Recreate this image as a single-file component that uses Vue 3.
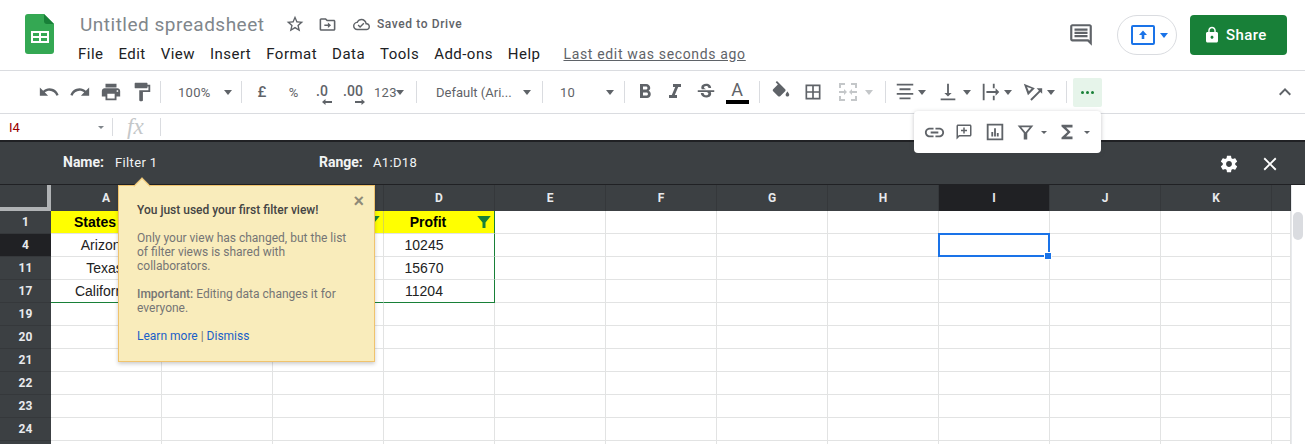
<script setup>
const I = {
  star: ['M22 9.24l-7.19-.62L12 2 9.19 8.63 2 9.24l5.46 4.73L5.82 21 12 17.27 18.18 21l-1.63-7.03L22 9.24zM12 15.4l-3.76 2.27 1-4.28-3.32-2.88 4.38-.38L12 6.1l1.71 4.04 4.38.38-3.32 2.88 1 4.28L12 15.4z'],
  folder: ['M20 6h-8l-2-2H4c-1.1 0-2 .9-2 2v12c0 1.1.9 2 2 2h16c1.1 0 2-.9 2-2V8c0-1.1-.9-2-2-2zm0 12H4V6h5.17l2 2H20v10z', 'M12.5 16.5l4-3.5-4-3.5V12H8v2h4.5z'],
  cloud: ['M19.35 10.04C18.67 6.59 15.64 4 12 4 9.11 4 6.6 5.64 5.35 8.04 2.34 8.36 0 10.91 0 14c0 3.31 2.69 6 6 6h13c2.76 0 5-2.24 5-5 0-2.64-2.05-4.78-4.65-4.96zM19 18H6c-2.21 0-4-1.79-4-4 0-2.05 1.53-3.76 3.56-3.97l1.07-.11.5-.95C8.08 7.14 9.94 6 12 6c2.62 0 4.88 1.86 5.39 4.43l.3 1.5 1.53.11c1.56.1 2.78 1.41 2.78 2.96 0 1.65-1.35 3-3 3zm-9-3.82l-2.09-2.09L6.5 13.5 10 17l6.01-6.01-1.41-1.41z'],
  comment: ['M20 2H4c-1.1 0-2 .9-2 2v12c0 1.1.9 2 2 2h14l4 4V4c0-1.1-.9-2-2-2zm0 15.17L18.83 16H4V4h16v13.17z', 'M6 12h12v2H6zM6 9h12v2H6zM6 6h12v2H6z'],
  lock: ['M18 8h-1V6c0-2.76-2.24-5-5-5S7 3.24 7 6v2H6c-1.1 0-2 .9-2 2v10c0 1.1.9 2 2 2h12c1.1 0 2-.9 2-2V10c0-1.1-.9-2-2-2zm-6 9c-1.1 0-2-.9-2-2s.9-2 2-2 2 .9 2 2-.9 2-2 2zm3.1-9H8.9V6c0-1.71 1.39-3.1 3.1-3.1 1.71 0 3.1 1.39 3.1 3.1v2z'],
  undo: ['M12.5 8c-2.65 0-5.05.99-6.9 2.6L2 7v9h9l-3.62-3.62c1.39-1.16 3.16-1.88 5.12-1.88 3.54 0 6.55 2.31 7.6 5.5l2.37-.78C21.08 11.03 17.15 8 12.5 8z'],
  redo: ['M18.4 10.6C16.55 8.99 14.15 8 11.5 8c-4.65 0-8.58 3.03-9.96 7.22L3.9 16c1.05-3.19 4.05-5.5 7.6-5.5 1.95 0 3.73.72 5.12 1.88L13 16h9V7l-3.6 3.6z'],
  print: ['M19 8H5c-1.66 0-3 1.34-3 3v6h4v4h12v-4h4v-6c0-1.66-1.34-3-3-3zm-3 11H8v-5h8v5zm3-7c-.55 0-1-.45-1-1s.45-1 1-1 1 .45 1 1-.45 1-1 1zm-1-9H6v4h12V3z'],
  paint: ['M18 4V3c0-.55-.45-1-1-1H5c-.55 0-1 .45-1 1v4c0 .55.45 1 1 1h12c.55 0 1-.45 1-1V6h1v4H9v11c0 .55.45 1 1 1h2c.55 0 1-.45 1-1v-9h8V4h-3z'],
  bold: ['M15.6 10.79c.97-.67 1.65-1.77 1.65-2.79 0-2.26-1.75-4-4-4H7v14h7.04c2.09 0 3.71-1.7 3.71-3.79 0-1.52-.86-2.82-2.15-3.42zM10 6.5h3c.83 0 1.5.67 1.5 1.5s-.67 1.5-1.5 1.5h-3v-3zm3.5 9H10v-3h3.5c.83 0 1.5.67 1.5 1.5s-.67 1.5-1.5 1.5z'],
  italic: ['M10 4v3h2.21l-3.42 8H6v3h8v-3h-2.21l3.42-8H18V4z'],
  strike: ['M6.85 7.08C6.85 4.37 9.45 3 12.24 3c1.64 0 3 .49 3.9 1.28.77.65 1.46 1.73 1.46 3.24h-3.01c0-.31-.05-.59-.15-.85-.29-.86-1.2-1.28-2.25-1.28-1.86 0-2.34 1.02-2.34 1.7 0 .48.25.88.74 1.21.38.25.77.48 1.41.7H7.39c-.21-.34-.54-.89-.54-1.92zM21 12v-2H3v2h9.62c1.15.45 1.96.75 1.96 1.97 0 1-.81 1.67-2.28 1.67-1.54 0-2.93-.54-2.93-2.51H6.4c0 .55.08 1.13.24 1.58.81 2.29 3.29 3.3 5.67 3.3 2.27 0 5.3-.89 5.3-4.05 0-.3-.01-1.16-.48-1.94H21V12z'],
  fill: ['M16.56 8.94L7.62 0 6.21 1.41l2.38 2.38-5.15 5.15c-.59.59-.59 1.54 0 2.12l5.5 5.5c.29.29.68.44 1.06.44s.77-.15 1.06-.44l5.5-5.5c.59-.58.59-1.53 0-2.12z', 'M19 11.5s-2 2.17-2 3.5c0 1.1.9 2 2 2s2-.9 2-2c0-1.33-2-3.5-2-3.5z'],
  borders: ['M3 3v18h18V3H3zm8 16H5v-6h6v6zm0-8H5V5h6v6zm8 8h-6v-6h6v6zm0-8h-6V5h6v6z'],
  merge: ['M3 3h6v2H5v3H3zM15 3h6v5h-2V5h-4zM3 16h2v3h4v2H3zM19 16h2v5h-6v-2h4zM3 11h5V9l3 3-3 3v-2H3zM21 13h-5v2l-3-3 3-3v2h5z'],
  align: ['M3 3h18v2H3zM6 8h12v2H6zM3 13h18v2H3zM6 18h12v2H6z'],
  valign: ['M16 13h-3V3h-2v10H8l4 4 4-4zM4 19v2h16v-2H4z'],
  wrap: ['M3 3h2v18H3zM14 3h2v5h-2zM14 16h2v5h-2zM7 11h10V8l4 4-4 4v-3H7z'],
  rotate: ['M2 3l12 5-7.500 7.500zM5.500 6.500l2 4.600 3-3z', 'M9 20l9.500-9.500L16 8h6v6l-2-2-9.500 9.500z'],
  up: ['M7.41 15.41L12 10.83l4.59 4.58L18 14l-6-6-6 6z'],
  link: ['M3.9 12c0-1.71 1.39-3.1 3.1-3.1h4V7H7c-2.76 0-5 2.24-5 5s2.24 5 5 5h4v-1.9H7c-1.71 0-3.1-1.39-3.1-3.1zM8 13h8v-2H8v2zm9-6h-4v1.9h4c1.71 0 3.1 1.39 3.1 3.1s-1.39 3.1-3.1 3.1h-4V17h4c2.76 0 5-2.24 5-5s-2.24-5-5-5z'],
  addc: ['M20 2H4c-1.1 0-2 .9-2 2v18l4-4h14c1.1 0 2-.9 2-2V4c0-1.1-.9-2-2-2zm0 14H5.17L4 17.17V4h16v12z', 'M11 6h2v3h3v2h-3v3h-2v-3H8V9h3z'],
  chart: ['M3 3h18v18H3zm2 2v14h14V5z', 'M8 12h2v5H8zM11 8h2v9h-2zM14 13h2v4h-2z'],
  funnel: ['M3 4h18l-7 8.5V20h-4v-7.5zm4.2 2l4.8 5.8L16.8 6z'],
  sigma: ['M18 4H6v2l6.5 6L6 18v2h12v-3h-7l5-5-5-5h7z'],
  gear: ['M19.43 12.98c.04-.32.07-.64.07-.98s-.03-.66-.07-.98l2.11-1.65c.19-.15.24-.42.12-.64l-2-3.46c-.12-.22-.39-.3-.61-.22l-2.49 1c-.52-.4-1.08-.73-1.69-.98l-.38-2.65C14.46 2.18 14.25 2 14 2h-4c-.25 0-.46.18-.49.42l-.38 2.65c-.61.25-1.17.59-1.69.98l-2.49-1c-.23-.09-.49 0-.61.22l-2 3.46c-.13.22-.07.49.12.64l2.11 1.65c-.04.32-.07.65-.07.98s.03.66.07.98l-2.11 1.65c-.19.15-.24.42-.12.64l2 3.46c.12.22.39.3.61.22l2.49-1c.52.4 1.08.73 1.69.98l.38 2.65c.03.24.24.42.49.42h4c.25 0 .46-.18.49-.42l.38-2.65c.61-.25 1.17-.59 1.69-.98l2.49 1c.23.09.49 0 .61-.22l2-3.46c.12-.22.07-.49-.12-.64l-2.11-1.65zM12 15.5c-1.93 0-3.5-1.57-3.5-3.5s1.57-3.5 3.5-3.5 3.5 1.57 3.5 3.5-1.57 3.5-3.5 3.5z'],
  close: ['M19 6.41L17.59 5 12 10.59 6.41 5 5 6.41 10.59 12 5 17.59 6.41 19 12 13.41 17.59 19 19 17.59 13.41 12z'],
  solid: ['M3 4h18l-7 8.5V20h-4v-7.5z'],
}
const menus = ['File', 'Edit', 'View', 'Insert', 'Format', 'Data', 'Tools', 'Add-ons', 'Help']
const tools = [
  { icon: 'undo', w: 31 }, { icon: 'redo', w: 31 }, { icon: 'print', w: 31 }, { icon: 'paint', w: 31 },
  { sep: 1, w: 7 },
  { text: '100%', w: 74, pad: 14, arrow: 60 },
  { sep: 1, w: 7 },
  { label: '£', w: 34, bold: 1 }, { label: '%', w: 29 },
  { dec: '.0', dir: 'l', w: 28 }, { dec: '.00', dir: 'r', w: 34 },
  { text: '123', w: 38, pad: 4, arrow: 26 },
  { sep: 1, w: 16 },
  { text: 'Default (Ari...', w: 111, pad: 12, arrow: 99, tight: 1 },
  { sep: 1, w: 14 },
  { text: '10', w: 68, pad: 11, arrow: 57 },
  { sep: 1, w: 14 },
  { icon: 'bold', w: 28, large: 1 }, { icon: 'italic', w: 31, large: 1 }, { icon: 'strike', w: 31 },
  { color: 1, w: 32 },
  { sep: 1, w: 12 },
  { icon: 'fill', w: 32 }, { icon: 'borders', w: 32, small: 1 },
  { icon: 'merge', w: 38, faint: 1, extra: 13, large: 1 },
  { sep: 1, w: 10 },
  { icon: 'align', w: 30, extra: 10 }, { icon: 'valign', w: 35, extra: 10 },
  { icon: 'wrap', w: 31, extra: 11 }, { icon: 'rotate', w: 32, extra: 11 },
  { sep: 1, w: 13 },
]
const popup = [
  { icon: 'link' }, { icon: 'addc' }, { icon: 'chart' },
  { icon: 'funnel', arrow: 1 }, { icon: 'sigma', arrow: 1 },
]
const cols = ['A', 'B', 'C', 'D', 'E', 'F', 'G', 'H', 'I', 'J', 'K', '']
const rows = [
  { id: 1, n: '1', c: ['States', '', '', 'Profit'], head: 1 },
  { id: 4, n: '4', c: ['Arizona', '', '', '10245'], sel: 1 },
  { id: 11, n: '11', c: ['Texas', '', '', '15670'] },
  { id: 17, n: '17', c: ['California', '', '', '11204'], last: 1 },
  { id: 19, n: '19', c: [] }, { id: 20, n: '20', c: [] }, { id: 21, n: '21', c: [] },
  { id: 22, n: '22', c: [] }, { id: 23, n: '23', c: [] }, { id: 24, n: '24', c: [] }, { id: 25, n: '', c: [] },
]
</script>

<template>
  <div class="app">
    <header class="top">
      <svg class="logo" width="29" height="40" viewBox="0 0 29 40">
        <path d="M3 0h16l10 10v27a3 3 0 0 1-3 3H3a3 3 0 0 1-3-3V3a3 3 0 0 1 3-3z" fill="#34a853" />
        <path d="M19 0l10 10h-7a3 3 0 0 1-3-3z" fill="#188038" />
        <path d="M6 17h18v12H6zm2 2v3h6v-3zm8 0v3h6v-3zM8 24v3h6v-3zm8 0v3h6v-3z" fill="#fff" fill-rule="evenodd" />
      </svg>
      <div class="titles">
        <div class="title-row">
          <span class="doc">Untitled spreadsheet</span>
          <svg class="i star" viewBox="0 0 24 24"><path v-for="d in I.star" :key="d" :d="d" /></svg>
          <svg class="i folder" viewBox="0 0 24 24"><path v-for="d in I.folder" :key="d" :d="d" /></svg>
          <svg class="i cloud" viewBox="0 0 24 24"><path v-for="d in I.cloud" :key="d" :d="d" /></svg>
          <span class="saved">Saved to Drive</span>
        </div>
        <nav class="menu">
          <span v-for="m in menus" :key="m">{{ m }}</span>
          <a class="last">Last edit was seconds ago</a>
        </nav>
      </div>
      <div class="actions">
        <svg class="i big" viewBox="0 0 24 24"><path v-for="d in I.comment" :key="d" :d="d" /></svg>
        <div class="present">
          <span class="pbox"><svg width="12" height="12" viewBox="0 0 12 12"><path d="M6 1.500L10 6H7.300v4H4.700V6H2z" fill="#1a73e8" /></svg></span>
          <span class="caret blue"></span>
        </div>
        <button class="share">
          <svg class="lock" viewBox="0 0 24 24"><path v-for="d in I.lock" :key="d" :d="d" /></svg>
          Share
        </button>
      </div>
    </header>

    <div class="toolbar">
      <template v-for="(t, k) in tools" :key="k">
        <div v-if="t.sep" class="sep-box" :style="{ width: t.w + 'px' }"><i></i></div>
        <div v-else class="tool" :style="{ width: t.w + (t.extra || 0) + 'px' }">
          <span v-if="t.icon" class="icon-slot" :class="{ faint: t.faint, large: t.large, small: t.small }" :style="{ width: t.w + 'px' }">
            <svg class="i" viewBox="0 0 24 24"><path v-for="d in I[t.icon]" :key="d" :d="d" /></svg>
          </span>
          <span v-if="t.icon && t.extra" class="caret near" :class="{ pale: t.faint }"></span>
          <span v-if="t.label" class="lab" :class="{ b: t.bold }">{{ t.label }}</span>
          <span v-if="t.dec" class="dec" :class="t.dir">
            <span>{{ t.dec }}</span>
            <svg width="10" height="6" viewBox="0 0 10 6"><path v-if="t.dir === 'l'" d="M0 3l3.500-3v2H10v2H3.500v2z" fill="#5f6368" /><path v-else d="M10 3L6.500 0v2H0v2h6.500v2z" fill="#5f6368" /></svg>
          </span>
          <template v-if="t.text">
            <span class="txt" :class="{ tight: t.tight }" :style="{ paddingLeft: t.pad + 'px' }">{{ t.text }}</span>
            <span class="caret over" :style="{ left: t.arrow + 'px' }"></span>
          </template>
          <span v-if="t.color" class="color">
            <span class="a">A</span>
            <span class="bar"></span>
          </span>
        </div>
      </template>
      <div class="more"><b></b><b></b><b></b></div>
      <svg class="i chev" viewBox="0 0 24 24"><path :d="I.up[0]" /></svg>
    </div>

    <div class="formula">
      <span class="ref">I4</span>
      <span class="caret tiny fcaret"></span>
      <i class="fsep"></i>
      <span class="fx">fx</span>
      <i class="fsep"></i>
    </div>

    <div class="filterbar">
      <b class="k">Name:</b><span class="v name">Filter 1</span>
      <b class="k range">Range:</b><span class="v">A1:D18</span>
      <svg class="white gear" viewBox="0 0 24 24"><path :d="I.gear[0]" /></svg>
      <svg class="white x" viewBox="0 0 24 24"><path :d="I.close[0]" /></svg>
    </div>

    <div class="sheet">
      <div class="grid">
        <div class="corner"></div>
        <div v-for="c in cols" :key="c" class="ch" :class="{ on: c === 'I' }">{{ c }}</div>
        <template v-for="r in rows" :key="r.id">
          <div class="rh" :class="{ on: r.sel }">{{ r.n }}</div>
          <div
            v-for="(c, j) in cols"
            :key="c"
            class="cell"
            :class="{
              head: r.head && j < 4,
              colA: j === 0,
              colD: j === 3,
              edge: j === 3 && r.id <= 17,
              bottom: r.last && j < 4,
              active: r.sel && c === 'I'
            }"
          >
            {{ r.c[j] }}
            <svg v-if="r.head && j < 4" class="fn" viewBox="0 0 24 24"><path :d="I.solid[0]" /></svg>
          </div>
        </template>
      </div>
      <div class="scroll"><span></span></div>
    </div>

    <aside class="tip">
      <span class="tx">×</span>
      <p class="t"><b>You just used your first filter view!</b></p>
      <p>Only your view has changed, but the list of filter views is shared with collaborators.</p>
      <p><b>Important:</b> Editing data changes it for everyone.</p>
      <p><a>Learn more</a> | <a>Dismiss</a></p>
    </aside>

    <div class="pop">
      <span v-for="p in popup" :key="p.icon" class="pop-item" :class="p.icon">
        <span class="pop-slot"><svg class="i" viewBox="0 0 24 24"><path v-for="d in I[p.icon]" :key="d" :d="d" /></svg></span>
        <span v-if="p.arrow" class="caret tiny"></span>
      </span>
    </div>
  </div>
</template>

<style>
html, body { margin: 0; overflow: hidden; background: #fff; }
</style>

<style scoped>
.app { position: relative; width: 1305px; height: 444px; overflow: hidden; font-family: Roboto, "Liberation Sans", sans-serif; background: #fff; color: #3c4043; }
.i { width: 22px; height: 22px; fill: #5f6368; display: block; flex: none; }
.caret { width: 0; height: 0; border: 4.5px solid transparent; border-top: 5px solid #5f6368; border-bottom: 0; display: block; flex: none; }
.caret.blue { border-top-color: #1a73e8; }
.caret.pale { border-top-color: #c4c7c9; }
.caret.tiny { border-width: 3px 3px 0; }
.caret.near { margin-left: -2px; }

.top { height: 70px; box-sizing: border-box; display: flex; align-items: flex-start; }
.logo { margin: 14px 0 0 25px; flex: none; }
.titles { margin-left: 24px; padding-top: 12px; }
.title-row { display: flex; align-items: center; height: 24px; margin-left: 2px; }
.doc { font-size: 19px; color: #80868b; letter-spacing: .5px; width: 205px; white-space: nowrap; }
.star { width: 20px; height: 20px; }
.folder { margin-left: 13px; width: 19px; height: 19px; }
.cloud { margin-left: 16px; width: 17px; height: 17px; }
.saved { margin-left: 7px; font-size: 12px; font-weight: 500; color: #5f6368; letter-spacing: .6px; }
.menu { display: flex; gap: 15px; margin-top: 7px; font-size: 15px; letter-spacing: .47px; line-height: 22px; color: #202124; white-space: nowrap; }
.last { margin-left: 8px; font-size: 14px; letter-spacing: .66px; color: #5f6368; text-decoration: underline; }
.actions { margin-left: auto; display: flex; align-items: center; padding: 15px 18px 0 0; }
.big { width: 26px; height: 26px; }
.present { height: 38px; margin-left: 23px; border: 1px solid #dadce0; border-radius: 20px; display: flex; align-items: center; padding-left: 13px; gap: 5px; width: 45px; }
.pbox { width: 20px; height: 16px; border: 2px solid #1a73e8; border-radius: 2px; display: flex; align-items: center; justify-content: center; }
.share { width: 97px; height: 40px; margin-left: 13px; border: 0; border-radius: 4px; background: #188038; color: #fff; font: 500 15px Roboto, sans-serif; letter-spacing: .4px; display: flex; align-items: center; gap: 5px; padding: 0 0 0 13px; }
.lock { width: 18px; height: 18px; fill: #fff; flex: none; }

.toolbar { height: 42px; border-top: 1px solid #dadce0; border-bottom: 1px solid #dadce0; display: flex; align-items: center; padding-left: 33px; position: relative; }
.sep-box { display: flex; justify-content: center; flex: none; }
.sep-box i { width: 1px; height: 22px; background: #dadce0; }
.tool { position: relative; flex: none; display: flex; align-items: center; height: 30px; color: #5f6368; font-size: 13px; }
.icon-slot { display: flex; justify-content: center; flex: none; }
.icon-slot.large .i { width: 24px; height: 24px; }
.icon-slot.small .i { width: 20px; height: 20px; }
.icon-slot.faint .i { fill: #c4c7c9; }
.lab { width: 100%; text-align: center; font-size: 13px; }
.lab.b { font-size: 15px; font-weight: 500; }
.dec { width: 100%; display: flex; flex-direction: column; align-items: center; padding-top: 6px; font-size: 14px; font-weight: 500; line-height: 13px; }
.dec svg { margin-top: 1px; }
.dec.l svg { margin-left: 10px; }
.dec.r svg { margin-left: 14px; }
.txt { white-space: nowrap; font-size: 13px; letter-spacing: .3px; color: #5f6368; }
.txt.tight { letter-spacing: 0; }
.over { position: absolute; top: 13px; }
.color { width: 100%; display: flex; flex-direction: column; align-items: center; }
.color .a { font-size: 18px; line-height: 19px; color: #5f6368; }
.color .bar { width: 23px; height: 4px; background: #000; margin-top: 1px; }
.more { width: 29px; height: 29px; background: #e6f4ea; border-radius: 2px; display: flex; align-items: center; justify-content: center; gap: 2px; flex: none; }
.more b { width: 3px; height: 3px; border-radius: 50%; background: #188038; }
.chev { position: absolute; left: 1273px; top: 9px; width: 24px; height: 24px; }

.formula { height: 26px; display: flex; align-items: center; position: relative; }
.ref { margin-left: 9px; font-size: 13px; color: #900; width: 89px; }
.fcaret { border-top-color: #80868b; }
.fsep { width: 1px; height: 18px; background: #dadce0; display: block; margin-left: 8px; }
.fx { font: italic 23px "Liberation Serif", serif; color: #c4c7c9; margin-left: 14px; width: 24px; }
.fx + .fsep { margin-left: 9px; }

.filterbar { height: 45px; box-sizing: border-box; border-top: 2px solid #202124; border-bottom: 1px solid #202124; background: #3c4043; color: #fff; display: flex; align-items: center; padding: 0 0 2px 63px; position: relative; }
.k { font-size: 14px; font-weight: 700; width: 52px; color: #f1f3f4; }
.k.range { width: 54px; }
.name { width: 152px; }
.v { font-size: 13px; letter-spacing: .35px; color: #f1f3f4; }
.v.name { width: 204px; }
.white { position: absolute; fill: #fff; }
.gear { left: 1219px; top: 12px; width: 20px; height: 20px; }
.x { left: 1259px; top: 11px; width: 22px; height: 22px; }

.sheet { display: flex; align-items: flex-start; }
.grid { display: grid; grid-template-columns: 51px repeat(11, 111px) 19px; grid-auto-rows: 23px; grid-template-rows: 26px; width: 1291px; flex: none; }
.corner { background: #3c4043; box-sizing: border-box; height: 26px; border-right: 4px solid #b0b3b5; border-bottom: 4px solid #b0b3b5; width: 51px; }
.ch { background: #3c4043; color: #e8eaed; font: 700 12px Roboto, sans-serif; display: flex; align-items: center; justify-content: center; box-sizing: border-box; border-right: 1px solid #35383b; }
.ch.on, .rh.on { background: #202124; }
.rh { background: #3c4043; color: #e8eaed; font: 700 12px Roboto, sans-serif; display: flex; align-items: center; justify-content: center; box-sizing: border-box; border-bottom: 1px solid #35383b; }
.cell { box-sizing: border-box; border-right: 1px solid #e2e3e3; border-bottom: 1px solid #e2e3e3; font: 14px "Liberation Sans", sans-serif; color: #222; display: flex; align-items: center; justify-content: center; position: relative; white-space: nowrap; }
.cell.colA { padding-right: 3px; }
.cell.colD { padding-right: 30px; }
.cell.head { background: #ff0; color: #000; font-weight: 700; border-right-color: #d8d84a; padding-right: 22px; }
.cell.edge { border-right-color: #188038; }
.cell.bottom { border-bottom-color: #188038; }
.cell.active::before { content: ""; position: absolute; left: -1px; top: -1px; width: 108px; height: 20px; border: 2px solid #1a73e8; }
.cell.active::after { content: ""; position: absolute; left: 105px; top: 18px; width: 6px; height: 6px; background: #1a73e8; border: 1px solid #fff; z-index: 1; }
.fn { position: absolute; right: 1px; top: 2px; width: 18px; height: 18px; fill: #188038; }
.scroll { flex: 1; height: 259px; background: #fff; border-left: 1px solid #e8eaed; padding: 27px 2px 0 1px; box-sizing: border-box; }
.scroll span { display: block; width: 10px; height: 28px; background: #dadce0; border-radius: 5px; }

.tip { position: absolute; left: 118px; top: 185px; width: 257px; height: 177px; box-sizing: border-box; background: #f9ecbb; border: 1px solid #f0c36d; padding: 17px 18px 0; font-size: 12px; line-height: 14px; color: #757575; box-shadow: 0 2px 4px rgba(0,0,0,.2); }
.tip::before { content: ""; position: absolute; left: 17px; top: -6px; width: 11px; height: 11px; background: #f9ecbb; border-left: 1px solid #f0c36d; border-top: 1px solid #f0c36d; transform: rotate(45deg); }
.tip p { margin: 0 0 14px; position: relative; }
.tip b { font-weight: 500; }
.tip .t b { color: #444; }
.tip a { color: #1a5fc8; }
.tx { position: absolute; right: 10px; top: 5px; font: 700 18px/20px "Liberation Sans", sans-serif; color: #8f8a78; }

.pop { position: absolute; left: 914px; top: 111px; width: 187px; height: 42px; background: #fff; border-radius: 4px; box-shadow: 0 1px 4px rgba(60,64,67,.3); display: flex; align-items: center; padding-left: 5px; box-sizing: border-box; }
.pop-item { display: flex; align-items: center; flex: none; }
.pop-slot { width: 30px; display: flex; justify-content: center; flex: none; }
.pop-item.addc { width: 31px; }
.pop-item.chart { width: 30px; }
.pop-item.funnel { width: 42px; }
.pop-item .caret { margin-left: 1px; }
.pop-item.sigma .caret { margin-left: 2px; }
.pop-item.link .i { width: 23px; height: 23px; }
.pop-item.addc .i { width: 18px; height: 18px; }
.pop-item.funnel .i { width: 21px; height: 21px; }
</style>
